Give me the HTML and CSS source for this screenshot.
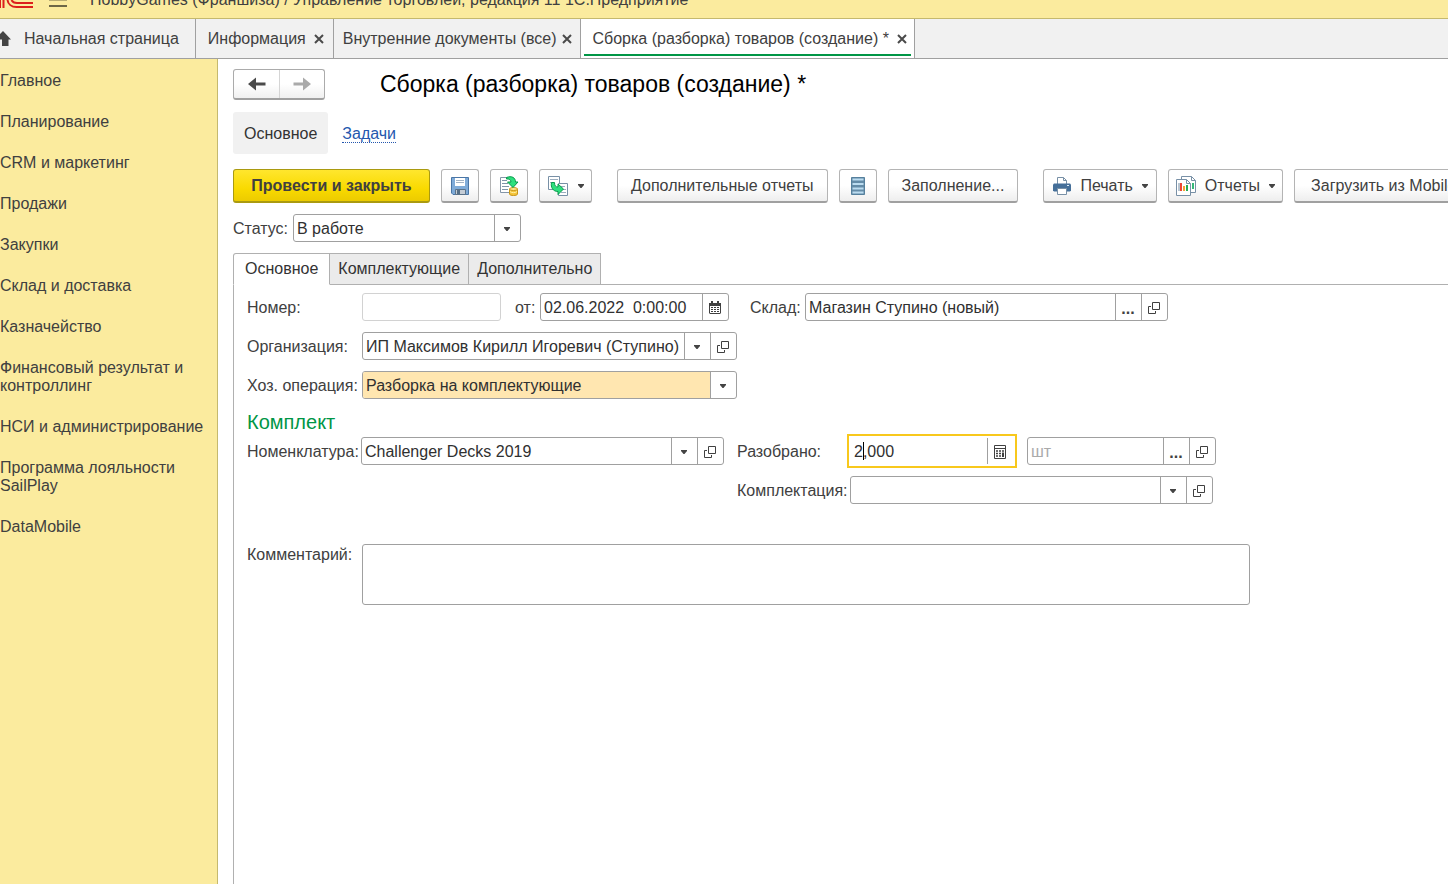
FILE: index.html
```html
<!DOCTYPE html>
<html lang="ru">
<head>
<meta charset="utf-8">
<title>Сборка (разборка) товаров (создание) *</title>
<link rel="stylesheet" href="styles.css">
</head>
<body>
<svg class="defs" aria-hidden="true">
  <symbol id="caret" viewBox="0 0 6 4"><path d="M0 0h6v1L3.500 4h-1L0 1z" fill="#444"/></symbol>
  <symbol id="open" viewBox="0 0 12 12"><path d="M4.500.5h7v7h-7zM3 4.500H.5v7h7V9" fill="none" stroke="#404040"/></symbol>
  <symbol id="close" viewBox="0 0 10 10"><path d="M1 1l8 8M9 1L1 9" fill="none" stroke="#4a4a4a" stroke-width="2"/></symbol>
</svg>

<header class="titlebar">
  <svg class="logo" width="33" height="18" viewBox="0 0 33 18" fill="none" stroke="#dc1f1c" stroke-width="2"><path d="M0 0v8M3.500 0v8"/><path d="M7.500 0c.5 4 4 7 9 7H33M11.500 0c1 2 3 3 5.500 3h16"/></svg>
  <button class="menu" aria-label="Меню"><svg width="18" height="9" viewBox="0 0 18 9"><path d="M0 .5h18" stroke="#b9ad73"/><path d="M0 6h18" stroke="#6d6747" stroke-width="2"/></svg></button>
  <span>HobbyGames (Франшиза) / Управление торговлей, редакция 11 1С:Предприятие</span>
</header>

<nav class="windows">
  <div class="window home"><svg width="11" height="16" viewBox="0 0 11 16"><path d="M3 0L11 8.500H8.500V15H2V8.500H0V3z" fill="#444"/></svg><a href="#">Начальная страница</a></div>
  <div class="window"><a href="#">Информация</a><button aria-label="Закрыть"><svg width="10" height="10"><use href="#close"/></svg></button></div>
  <div class="window compact"><a href="#">Внутренние документы (все)</a><button aria-label="Закрыть"><svg width="10" height="10"><use href="#close"/></svg></button></div>
  <div class="window current"><a href="#">Сборка (разборка) товаров (создание) *</a><button aria-label="Закрыть"><svg width="10" height="10"><use href="#close"/></svg></button></div>
</nav>

<div class="workspace">
  <nav class="sections">
    <a href="#">Главное</a>
    <a href="#">Планирование</a>
    <a href="#">CRM и маркетинг</a>
    <a href="#">Продажи</a>
    <a href="#">Закупки</a>
    <a href="#">Склад и доставка</a>
    <a href="#">Казначейство</a>
    <a href="#">Финансовый результат и контроллинг</a>
    <a href="#">НСИ и администрирование</a>
    <a href="#">Программа лояльности SailPlay</a>
    <a href="#">DataMobile</a>
  </nav>

  <main class="document">
    <div class="heading">
      <div class="history">
        <button aria-label="Назад"><svg width="18" height="14" viewBox="0 0 18 14"><path d="M0 7l8-6.500V5.500h9.500v3H8v5z" fill="#4a4a4a"/></svg></button>
        <button aria-label="Вперед" disabled><svg width="18" height="14" viewBox="0 0 18 14"><path d="M18 7l-8-6.500V5.500H.5v3H10v5z" fill="#aaa"/></svg></button>
      </div>
      <h1>Сборка (разборка) товаров (создание) *</h1>
    </div>

    <nav class="subnav">
      <a class="active" href="#">Основное</a>
      <a class="link" href="#">Задачи</a>
    </nav>

    <div class="toolbar">
      <div class="group">
        <button class="btn primary">Провести и закрыть</button>
        <button class="btn icon" aria-label="Записать"><svg width="18" height="18" viewBox="0 0 18 18"><path d="M.5.500h17v17H2l-1.500-1.500z" fill="#7fabd8" stroke="#4a76a6"/><path d="M4 1h10v8H4z" fill="#fff"/><path d="M5 3.500h8M5 5.500h8" stroke="#a3b4c6"/><path d="M4.500 12.500h10v5h-10z" fill="#c5cdd6" stroke="#5b7288"/><path d="M6 13h3v4H6z" fill="#566f86"/></svg></button>
        <button class="btn icon" aria-label="Провести"><svg width="20" height="20" viewBox="0 0 20 20"><path d="M1.500 1.500h12v15h-12z" fill="#fff" stroke="#8496a8"/><path d="M3 4.500h5M3 7.500h6M3 10.500h7M3 13.500h6" stroke="#7f95a9"/><path d="M10.500 13v5c0 2 8 2 8 0v-5z" fill="#f5c53b" stroke="#c7961b"/><ellipse cx="14.500" cy="13" rx="4" ry="1.500" fill="#ffe88a" stroke="#c7961b"/><path d="M11 15.500c1 1.500 6 1.500 7 0" fill="none" stroke="#fff0a6"/><path d="M7.500 1.500c5-2 9 0 9 4.500h2.500l-5 5.500L8.500 6H12c0-2-2-3.500-4.500-3z" fill="#2ee07e" stroke="#089a4c"/></svg></button>
        <button class="btn icon wide" aria-label="Создать на основании"><svg width="20" height="20" viewBox="0 0 20 20"><path d="M.5.500h11v13H.5z" fill="#fff" stroke="#7890a6"/><path d="M2 3.500h8M2 6.500h3" stroke="#9caebf"/><path d="M10.500 7.500h9v12h-9z" fill="#fff" stroke="#7890a6"/><path d="M13 10.500h4M15 13.500h3M13 16.500h5" stroke="#9caebf"/><path d="M3.500 6.500h3c0 3 1 4.500 3.500 4.500V8l5.500 5-5.500 5.500V15.500c-5 0-7.500-4-6.500-9z" fill="#2ee07e" stroke="#089a4c"/></svg><svg width="6" height="4"><use href="#caret"/></svg></button>
      </div>
      <div class="group">
        <button class="btn">Дополнительные отчеты</button>
        <button class="btn icon" aria-label="Список"><svg width="14" height="18" viewBox="0 0 14 18"><path d="M.5.500h13v17H.5z" fill="#648ca8" stroke="#55809d"/><path d="M1.500 2.500h11M1.500 7h11M1.500 11.500h11M1.500 15.500h11" stroke="#bbdcf0" stroke-width="2"/></svg></button>
        <button class="btn">Заполнение...</button>
      </div>
      <div class="group">
        <button class="btn drop"><svg width="18" height="18" viewBox="0 0 18 18"><path d="M4.500 7V.5h6l3 3V7" fill="#fff" stroke="#7890a6"/><path d="M10.500.5v3h3" fill="none" stroke="#7890a6"/><path d="M1 6.500h16l1 1v6l-1 1H1l-1-1v-6z" fill="#456f99"/><path d="M14 8.500h2" stroke="#dceaf5"/><path d="M4.500 11.500h9v6h-9z" fill="#fff" stroke="#7890a6"/></svg><span>Печать</span><svg width="6" height="4"><use href="#caret"/></svg></button>
        <button class="btn drop reports"><svg width="20" height="20" viewBox="0 0 20 20"><path d="M5.500.5h10l4 4v12h-14z" fill="#fff" stroke="#7890a6"/><path d="M15.500.5v4h4" fill="none" stroke="#7890a6"/><path d="M17 7v6" stroke="#35b878" stroke-width="2"/><path d="M.5 3.500h10l4 4v12H.5z" fill="#fff" stroke="#7890a6"/><path d="M10.500 3.500v4h4" fill="none" stroke="#7890a6"/><path d="M3 7v8" stroke="#738ca2"/><path d="M5 7v8" stroke="#ec4634" stroke-width="2"/><path d="M8 10v5" stroke="#f5a234" stroke-width="2"/><path d="M11 9v6" stroke="#27ad55" stroke-width="2"/></svg><span>Отчеты</span><svg width="6" height="4"><use href="#caret"/></svg></button>
        <button class="btn load">Загрузить из MobileLogistics</button>
      </div>
    </div>

    <div class="status">
      <label for="status">Статус:</label>
      <div class="field w-status"><select id="status"><option>В работе</option></select><button tabindex="-1" aria-label="Выбрать"><svg width="6" height="4"><use href="#caret"/></svg></button></div>
    </div>

    <div class="tabs" role="tablist">
      <button role="tab" aria-selected="true">Основное</button>
      <button role="tab" aria-selected="false">Комплектующие</button>
      <button role="tab" aria-selected="false">Дополнительно</button>
      <span class="rule"></span>
    </div>

    <section class="panel">
      <div class="row">
        <label class="lead" for="number">Номер:</label>
        <div class="field w-number readonly"><input id="number" readonly></div>
        <label class="date-label" for="date">от:</label>
        <div class="field w-short"><input id="date" value="02.06.2022  0:00:00"><button aria-label="Календарь"><svg width="12" height="13" viewBox="0 0 12 13"><path d="M0 2h2V0h2v2h4V0h2v2h2v10l-1 1H1l-1-1z" fill="#404040"/><path d="M1 5h10v7H1z" fill="#fff"/><path d="M2 6.500h8M2 8.500h8M2 10.500h8" stroke="#404040" stroke-dasharray="2 1"/></svg></button></div>
        <label class="store-label" for="store">Склад:</label>
        <div class="field w-long"><input id="store" value="Магазин Ступино (новый)"><button class="dots" aria-label="Выбрать">...</button><button aria-label="Открыть"><svg width="12" height="12"><use href="#open"/></svg></button></div>
      </div>
      <div class="row">
        <label class="lead" for="org">Организация:</label>
        <div class="field w-org"><input id="org" value="ИП Максимов Кирилл Игоревич (Ступино)"><button aria-label="Выбрать"><svg width="6" height="4"><use href="#caret"/></svg></button><button aria-label="Открыть"><svg width="12" height="12"><use href="#open"/></svg></button></div>
      </div>
      <div class="row">
        <label class="lead" for="operation">Хоз. операция:</label>
        <div class="field w-org marked"><select id="operation"><option>Разборка на комплектующие</option></select><button tabindex="-1" aria-label="Выбрать"><svg width="6" height="4"><use href="#caret"/></svg></button></div>
      </div>

      <h2>Комплект</h2>
      <div class="kit">
        <div class="row">
          <label class="lead" for="item">Номенклатура:</label>
          <div class="field w-long"><input id="item" value="Challenger Decks 2019"><button aria-label="Выбрать"><svg width="6" height="4"><use href="#caret"/></svg></button><button aria-label="Открыть"><svg width="12" height="12"><use href="#open"/></svg></button></div>
        </div>
        <div class="kit-side">
          <div class="row">
            <label class="lead" for="qty">Разобрано:</label>
            <div class="field w-qty focused"><input id="qty" value="2,000"><span class="cursor"></span><button aria-label="Калькулятор"><svg width="12" height="14" viewBox="0 0 12 14"><path d="M.5.500h11v13H.5zM1 3.500h10" fill="none" stroke="#404040"/><path d="M2 6h5M2 8.500h5M2 11h5" stroke="#404040" stroke-width="1.500" stroke-dasharray="2 1"/><path d="M9 5.250v1.500M9 7.500v4.500" stroke="#404040" stroke-width="2"/></svg></button></div>
            <div class="field w-short unit"><input aria-label="Единица измерения" placeholder="шт"><button class="dots" aria-label="Выбрать">...</button><button aria-label="Открыть"><svg width="12" height="12"><use href="#open"/></svg></button></div>
          </div>
          <div class="row">
            <label class="lead" for="variant">Комплектация:</label>
            <div class="field w-long"><input id="variant"><button aria-label="Выбрать"><svg width="6" height="4"><use href="#caret"/></svg></button><button aria-label="Открыть"><svg width="12" height="12"><use href="#open"/></svg></button></div>
          </div>
        </div>
      </div>

      <div class="row comment">
        <label class="lead" for="comment">Комментарий:</label>
        <textarea id="comment"></textarea>
      </div>
    </section>
  </main>
</div>
</body>
</html>
```

FILE: styles.css
```css
* { box-sizing: border-box; }

body {
  margin: 0;
  height: 100vh;
  display: flex;
  flex-direction: column;
  overflow: hidden;
  background: #fff;
  color: #404040;
  font: 16px/18px "Liberation Sans", Arial, sans-serif;
}

button, input, select, textarea { font: inherit; color: inherit; margin: 0; }
button { padding: 0; border: 0; background: none; }
a { color: inherit; text-decoration: none; }
svg { display: block; flex: none; }
.defs { position: absolute; width: 0; height: 0; }

.titlebar {
  flex: none;
  height: 19px;
  display: flex;
  align-items: flex-end;
  overflow: hidden;
  background: #fbeb9e;
  border-bottom: 1px solid #c5b96e;
}
.titlebar .logo { margin-right: 16px; }
.titlebar .menu { margin: 0 23px 9px 0; }
.titlebar span { padding-bottom: 9px; white-space: nowrap; }

.windows {
  flex: none;
  height: 40px;
  display: flex;
  background: #f1f1f1;
  border-bottom: 1px solid #a0a0a0;
}
.window {
  display: flex;
  align-items: center;
  gap: 8px;
  padding: 0 9px 0 12px;
  border-right: 1px solid #a0a0a0;
  white-space: nowrap;
}
.window.home { gap: 13px; padding: 0 16px 0 0; }
.window.compact { gap: 6px; padding: 0 8px 0 9px; }
.window.current { position: relative; padding: 0 7px 0 11px; background: #fff; }
.window.current::after {
  content: "";
  position: absolute;
  left: 3px;
  right: 3px;
  bottom: 2px;
  height: 2px;
  background: #009646;
}

.workspace { flex: 1; min-height: 0; display: flex; }

.sections {
  flex: none;
  width: 218px;
  padding: 13px 8px 0 0;
  display: flex;
  flex-direction: column;
  gap: 23px;
  background: #fbeb9e;
  border-right: 1px solid #c5b96e;
}

.document {
  flex: 1;
  min-width: 0;
  display: flex;
  flex-direction: column;
  padding: 10px 0 0 15px;
  overflow: hidden;
}

.heading { display: flex; align-items: center; gap: 55px; }
.history {
  display: flex;
  height: 31px;
  border: 1px solid #ababab;
  border-bottom: 2px solid #a0a0a0;
  border-radius: 3px;
  background: linear-gradient(#fff 50%, #f0f0f0);
}
.history button { width: 44px; display: flex; align-items: center; justify-content: center; }
.history button:first-child { width: 46px; border-right: 1px solid #d5d5d5; }
h1 { margin: 0; padding-bottom: 2px; font-size: 23px; line-height: 28px; font-weight: 400; color: #000; }

.subnav { display: flex; align-items: center; gap: 14px; margin-top: 12px; }
.subnav .active { padding: 13px 11px 11px; border-radius: 3px; background: #f1f1f1; color: #333; }
.subnav .link { margin-top: 2px; color: #2457ae; line-height: 17px; border-bottom: 1px dotted #2457ae; }

.toolbar { display: flex; gap: 25px; margin-top: 15px; }
.group { display: flex; flex: none; gap: 11px; }
.btn {
  display: flex;
  align-items: center;
  justify-content: center;
  height: 34px;
  padding: 0 13px;
  border: 1px solid #b4b4b4;
  border-bottom: 2px solid #a0a0a0;
  border-radius: 3px;
  background: linear-gradient(#fff 50%, #eee);
  white-space: nowrap;
}
.btn.primary {
  padding: 0 17px;
  min-width: 197px;
  font-weight: 700;
  background: linear-gradient(#ffe62e, #f9da00 60%, #eccb00);
  border-color: #aa9a10;
}
.btn.icon { width: 38px; padding: 0; }
.btn.icon.wide { width: 53px; gap: 10px; }
.btn.drop { padding: 0 8px 0 9px; gap: 9px; }
.btn.drop.reports { padding: 0 7px; }
.btn.load { padding: 0 16px; }

.status { display: flex; align-items: center; margin-top: 11px; }
.status label { width: 60px; padding-top: 2px; }

.field {
  display: flex;
  flex: none;
  height: 28px;
  border: 1px solid #a0a0a0;
  border-radius: 3px;
  background: #fff;
  overflow: hidden;
}
.field input, .field select {
  flex: 1;
  min-width: 0;
  padding: 2px 3px 0;
  border: 0;
  outline: 0;
  appearance: none;
  background: transparent;
  color: #303030;
}
.field input { white-space: pre; }
.field input::placeholder { color: #aaa; opacity: 1; }
.field button {
  flex: none;
  width: 26px;
  padding: 1px 1px 0 0;
  display: flex;
  align-items: center;
  justify-content: center;
  border-left: 1px solid #a0a0a0;
}
.field .dots { padding-top: 3px; font-weight: 700; }
.w-status { width: 228px; }
.w-number { width: 139px; }
.w-short { width: 189px; }
.w-long { width: 363px; }
.w-org { width: 375px; }
.w-qty { width: 170px; }
.readonly { border-color: #d2d2d2; }
.marked select { background: #ffe6b0; }
.focused {
  position: relative;
  height: 34px;
  margin: -3px 10px -3px -3px;
  padding: 2px 1px;
  border: 2px solid #f8c81c;
  border-radius: 0;
}
.focused input { padding-left: 4px; }
.focused button { width: 27px; padding-right: 2px; }
.focused .cursor { position: absolute; left: 14px; top: 6px; width: 1px; height: 18px; background: #000; }

.tabs { display: flex; margin-top: 11px; }
.tabs button {
  height: 32px;
  padding: 0 8px;
  border: 1px solid #b0b0b0;
  border-left: 0;
  background: #ebebeb;
  color: #333;
}
.tabs button:first-child {
  padding: 0 11px;
  border-left: 1px solid #b0b0b0;
  border-bottom-color: #fff;
  border-radius: 3px 0 0 0;
  background: #fff;
}
.tabs .rule { flex: 1; border-bottom: 1px solid #b0b0b0; }

.panel {
  flex: 1;
  display: flex;
  flex-direction: column;
  gap: 11px;
  padding: 8px 0 0 13px;
  border-left: 1px solid #b0b0b0;
}
.row { display: flex; align-items: center; }
.row label { padding-top: 2px; }
.lead { flex: none; width: 115px; }
.date-label { margin-left: 14px; width: 25px; }
.store-label { margin-left: 21px; width: 55px; }
h2 { margin: 0 0 -8px; font-size: 20px; line-height: 24px; font-weight: 400; color: #009646; }
.kit { display: flex; align-items: flex-start; gap: 13px; }
.kit > .row .lead { width: 114px; }
.kit-side { display: flex; flex-direction: column; gap: 11px; }
.kit-side .lead { width: 113px; }
.comment { align-items: flex-start; margin-top: 29px; padding-right: 198px; }
textarea {
  flex: 1;
  min-width: 0;
  height: 61px;
  border: 1px solid #a0a0a0;
  border-radius: 3px;
  resize: none;
  outline: 0;
}
```
